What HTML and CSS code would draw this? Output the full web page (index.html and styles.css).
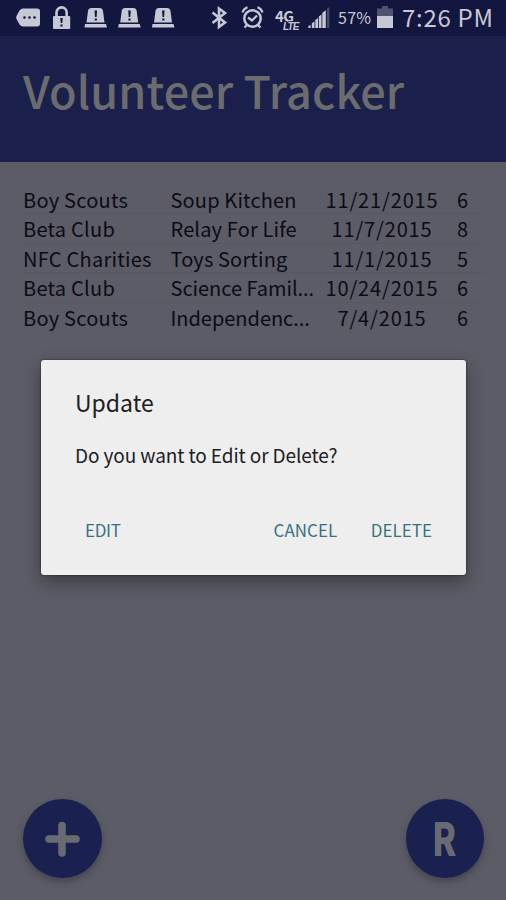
FILE: index.html
```html
<!DOCTYPE html>
<html lang="en">
<head>
<meta charset="utf-8">
<title>Volunteer Tracker</title>
<link rel="stylesheet" href="styles.css">
</head>
<body>
<div class="screen">
  <div class="status">
    <svg class="icons" width="180" height="36" viewBox="0 0 180 36" fill="#c6c8d5">
      <path d="M23 8.500h14q3 0 3 3v12q0 3-3 3H23q-2 0-3.500-2l-3-5.500q-.7-1.500 0-3l3-5.500q1.500-2 3.500-2z"/>
      <g fill="#13163e"><circle cx="24.500" cy="17.500" r="1.300"/><circle cx="29.500" cy="17.500" r="1.300"/><circle cx="34.500" cy="17.500" r="1.300"/></g>
      <path d="M56.500 17v-4.500a5.100 5.100 0 0 1 10.200 0V17" fill="none" stroke="#c6c8d5" stroke-width="2.600"/>
      <rect x="53" y="16" width="17.200" height="13" rx="1"/>
      <path d="M60.300 18h2.400l-.4 5h-1.600zM60.400 24.500h2.200v2h-2.200z" fill="#13163e"/>
      <g id="alert"><path d="M86.500 22.500L88 11q.4-3 3.500-3h8q3.100 0 3.500 3l1.500 11.500zM85 24h21l1 3.500H84.500z"/><path d="M94.500 10.500h2.600l-.5 6.500h-1.600zM94.700 18.500h2.200v2h-2.200z" fill="#13163e"/></g>
      <use href="#alert" x="33.700"/><use href="#alert" x="67.500"/>
    </svg>
    <div class="status-right">
      <svg width="127" height="36" viewBox="0 0 127 36" fill="none" stroke="#c6c8d5">
        <path d="M4.500 12.500L17 22.500l-6 4.500V8.500l6 4.500-12.500 10" stroke-width="2.600"/>
        <circle cx="44.500" cy="18.500" r="8.200" stroke-width="2.500"/>
        <path d="M40 17.500l4 3 5-5M34.500 12.500q1-4 5-5.300M54.500 12.500q-1-4-5-5.300M39 25l-2.500 2.500M50 25l2.500 2.500" stroke-width="2.200"/>
        <g fill="#c6c8d5" stroke="none">
          <text x="67" y="22" class="net">4G</text><text x="75" y="30" class="lte">LTE</text>
          <path d="M100.300 28v-2l2.300-1v3zM103.800 28v-4.800l2.700-1.700V28zM107.300 28v-8l2.700-1.900V28zM110.800 28V16.500l2.700-2V28zM114.300 28V12.800l3.500-2.500V28z"/>
          <path d="M118.800 28V9l2.500-2.200V28z" opacity=".3"/>
        </g>
      </svg>
      <span class="pct">57%</span>
      <svg width="17" height="36" viewBox="0 0 17 36"><path d="M5 6h6v2.500h5V28H0V8.500h5z" fill="#50536d"/><path d="M0 16h16v12H0z" fill="#c6c8d5"/></svg>
      <span class="time">7:26 PM</span>
    </div>
  </div>
  <header class="bar"><h1>Volunteer Tracker</h1></header>
  <div class="list">
    <div class="row"><span class="club">Boy Scouts</span><span class="event">Soup Kitchen</span><span class="date">11/21/2015</span><span class="hours">6</span></div>
    <div class="row"><span class="club">Beta Club</span><span class="event">Relay For Life</span><span class="date">11/7/2015</span><span class="hours">8</span></div>
    <div class="row"><span class="club">NFC Charities</span><span class="event">Toys Sorting</span><span class="date">11/1/2015</span><span class="hours">5</span></div>
    <div class="row"><span class="club">Beta Club</span><span class="event tight">Science Famil...</span><span class="date">10/24/2015</span><span class="hours">6</span></div>
    <div class="row"><span class="club">Boy Scouts</span><span class="event tight">Independenc...</span><span class="date">7/4/2015</span><span class="hours">6</span></div>
  </div>
  <div class="fabs">
    <div class="fab"><svg width="78" height="78" viewBox="0 0 78 78"><path d="M39 25.500v27.500M26 39h27" stroke="#686c72" stroke-width="7.500" stroke-linecap="round"/></svg></div>
    <div class="fab"><span class="letter">R</span></div>
  </div>
  <div class="dialog">
    <h2>Update</h2>
    <p>Do you want to Edit or Delete?</p>
    <div class="actions"><span class="edit">EDIT</span><span class="cancel">CANCEL</span><span class="delete">DELETE</span></div>
  </div>
</div>
</body>
</html>
```

FILE: styles.css
```css
* { box-sizing: border-box; }
body { margin: 0; font-family: "Noto Sans CJK SC", "Noto Sans", sans-serif; }
.screen { position: relative; width: 506px; height: 900px; overflow: hidden; background: #5b5c65; display: flex; flex-direction: column; }
.status { height: 36px; flex: none; background: #13163e; color: #c6c8d5; display: flex; justify-content: space-between; }
.status-right { display: flex; align-items: center; width: 298px; }
.status svg { display: block; flex: none; }
.net { font: bold 15px "Noto Sans CJK SC", sans-serif; letter-spacing: -.5px; }
.lte { font: italic bold 10px "Liberation Sans", sans-serif; letter-spacing: -.8px; stroke: #13163e; stroke-width: 1.500px; paint-order: stroke; }
.pct { width: 42px; padding-left: 3px; font-size: 16px; line-height: 34px; height: 36px; letter-spacing: .3px; white-space: nowrap; }
.time { padding-left: 8px; font-size: 24px; line-height: 34px; height: 36px; letter-spacing: .7px; white-space: nowrap; }
.bar { height: 126px; flex: none; padding-left: 23px; background: #1a204b; }
.bar h1 { margin: 0; font-size: 45px; line-height: 107px; font-weight: 500; letter-spacing: .1px; color: #6b6c6d; white-space: nowrap; }
.list { margin: 0 22px 0 23px; padding-top: 22.500px; }
.row { height: 29.600px; display: grid; grid-template-columns: 147.500px 143.500px 136px 1fr; line-height: 29px; font-size: 20px; letter-spacing: .25px; color: #0b0b16; border-bottom: 1px solid #56575f; white-space: nowrap; }
.row:last-child { border: 0; }
.event { letter-spacing: .15px; }
.tight { letter-spacing: -.03px; }
.date { text-align: center; letter-spacing: .85px; }
.hours { padding-left: 7px; }
.fabs { margin-top: auto; padding: 0 22px 22px 23px; display: flex; justify-content: space-between; }
.fab { width: 78.500px; height: 79px; border-radius: 50%; background: #1a204f; box-shadow: 0 4px 7px rgba(35,36,50,.4); display: flex; align-items: center; justify-content: center; }
.letter { color: #686c72; font: 900 46px/75px "Noto Sans CJK SC", sans-serif; transform: translateY(-2px) scaleX(.75); }
.dialog { position: absolute; left: 41px; top: 360px; width: 425px; height: 215px; padding: 24px 34px 0; border-radius: 3px; background: #eee; color: #202022; box-shadow: 0 0 2px rgba(0,0,0,.7), 0 7px 18px rgba(0,0,0,.35); }
.dialog h2 { margin: 0; font-size: 23px; font-weight: 400; line-height: 36px; }
.dialog p { margin: 20px 0 0; font-size: 19px; line-height: 30px; letter-spacing: -.1px; white-space: nowrap; }
.actions { display: flex; margin-top: 47px; padding-left: 10px; font-size: 17px; line-height: 26px; color: #39727f; letter-spacing: 0; white-space: nowrap; }
.edit { width: 190px; letter-spacing: -.3px; }
.cancel { width: 98px; }
```
